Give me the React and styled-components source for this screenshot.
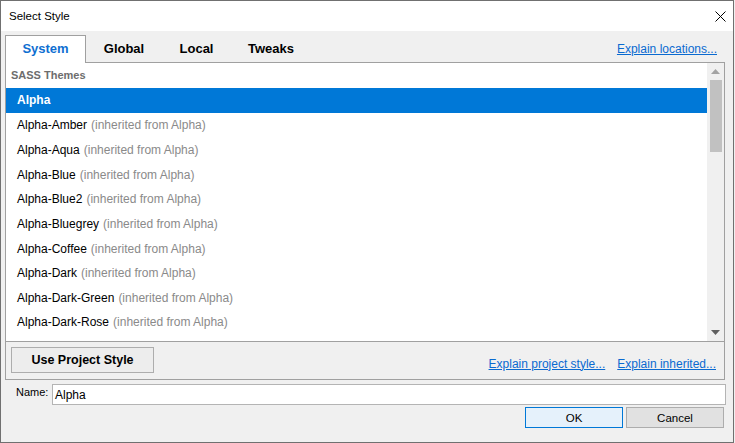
import styled, { createGlobalStyle } from 'styled-components';

const GlobalStyle = createGlobalStyle`
  html, body {
    margin: 0;
    padding: 0;
    background: #f0f0f0;
  }
  * {
    box-sizing: border-box;
  }
`;

const Window = styled.div`
  width: 734px;
  height: 443px;
  border: 1px solid #707070;
  background: #f0f0f0;
  display: flex;
  flex-direction: column;
  font-family: "Liberation Sans", Arial, sans-serif;
  color: #000;
  overflow: hidden;
`;

const TitleBar = styled.div`
  height: 30px;
  flex: none;
  background: #fff;
  display: flex;
  align-items: center;
  padding-left: 8px;
  font-size: 11.5px;
`;

const CloseButton = styled.div`
  margin-left: auto;
  width: 46px;
  height: 30px;
  display: flex;
  align-items: center;
  justify-content: center;
  margin-right: -10px;
`;

const Content = styled.div`
  flex: 1;
  display: flex;
  flex-direction: column;
  padding: 4px 8px 0 4px;
`;

const TabRow = styled.div`
  display: flex;
  align-items: flex-end;
  height: 28px;
  margin-bottom: -1px;
`;

const Tab = styled.div`
  position: relative;
  z-index: 1;
  width: ${p => p.$w}px;
  height: ${p => (p.$active ? 28 : 27)}px;
  align-self: flex-start;
  display: flex;
  align-items: center;
  justify-content: center;
  font-size: 13px;
  font-weight: bold;
  color: ${p => (p.$active ? '#0f6fd1' : '#000')};
  background: ${p => (p.$active ? '#fff' : 'transparent')};
  border: 1px solid ${p => (p.$active ? '#a0a0a0' : 'transparent')};
  border-bottom: none;
  padding-bottom: 2px;
`;

const Link = styled.span`
  color: #0a6ad0;
  text-decoration: underline;
  font-size: 12px;
  white-space: nowrap;
`;

const TabLink = styled(Link)`
  margin-left: auto;
  margin-right: 8px;
  align-self: center;
  padding-bottom: 1px;
`;

const Panel = styled.div`
  height: 318px;
  border: 1px solid #a0a0a0;
  display: flex;
  flex-direction: column;
`;

const ListArea = styled.div`
  height: 279px;
  flex: none;
  display: flex;
  background: #fff;
  border-bottom: 1px solid #a0a0a0;
`;

const List = styled.div`
  flex: 1;
  overflow: hidden;
`;

const GroupHeader = styled.div`
  height: 25px;
  line-height: 25px;
  padding-left: 5px;
  font-size: 11px;
  font-weight: bold;
  color: #6d6d6d;
`;

const Row = styled.div`
  height: 24.625px;
  display: flex;
  align-items: center;
  padding-left: 11px;
  padding-top: ${p => (p.$selected ? 0 : 1)}px;
  font-size: 12px;
  white-space: nowrap;
  background: ${p => (p.$selected ? '#0078d7' : 'transparent')};
  color: ${p => (p.$selected ? '#fff' : '#000')};
  font-weight: ${p => (p.$selected ? 'bold' : 'normal')};
`;

const Inherited = styled.span`
  color: #8a8a8a;
  margin-left: 4px;
`;

const Scrollbar = styled.div`
  width: 17px;
  flex: none;
  background: #f0f0f0;
  display: flex;
  flex-direction: column;
  align-items: center;
`;

const ArrowBox = styled.div`
  height: 17px;
  width: 17px;
  display: flex;
  align-items: center;
  justify-content: center;
`;

const Thumb = styled.div`
  width: 12px;
  height: 72px;
  background: #c1c1c1;
  margin-left: 1px;
`;

const Spacer = styled.div`
  flex: 1;
`;

const ActionRow = styled.div`
  flex: 1;
  display: flex;
  align-items: flex-start;
  padding: 5px 8px 0 5px;
  gap: 12px;
`;

const ProjectButton = styled.div`
  width: 143px;
  height: 26px;
  border: 1px solid #adadad;
  background: #ededed;
  display: flex;
  align-items: center;
  justify-content: center;
  font-size: 12.5px;
  font-weight: bold;
  margin-right: auto;
`;

const RowLink = styled(Link)`
  align-self: center;
  margin-top: 1px;
`;

const NameRow = styled.div`
  display: flex;
  align-items: flex-start;
  margin-top: 4px;
  margin-right: -1px;
`;

const NameLabel = styled.div`
  width: 36px;
  margin-left: 11px;
  padding-top: 2px;
  font-size: 11px;
`;

const NameInput = styled.div`
  flex: 1;
  height: 21px;
  border: 1px solid #b4b4b4;
  background: #fff;
  font-size: 12px;
  display: flex;
  align-items: center;
  padding-left: 2px;
  padding-top: 1px;
`;

const ButtonRow = styled.div`
  display: flex;
  justify-content: flex-end;
  gap: 3px;
  margin-top: 2px;
  margin-right: 1px;
`;

const DialogButton = styled.div`
  width: 98px;
  height: 21px;
  display: flex;
  align-items: center;
  justify-content: center;
  font-size: 11.5px;
  border: 1px solid ${p => (p.$default ? '#0078d7' : '#adadad')};
  background: ${p => (p.$default ? '#e5f1fb' : '#e1e1e1')};
`;

const themes = [
  'Alpha-Amber',
  'Alpha-Aqua',
  'Alpha-Blue',
  'Alpha-Blue2',
  'Alpha-Bluegrey',
  'Alpha-Coffee',
  'Alpha-Dark',
  'Alpha-Dark-Green',
  'Alpha-Dark-Rose',
];

const tabs = [
  { label: 'System', w: 81 },
  { label: 'Global', w: 76 },
  { label: 'Local', w: 69 },
  { label: 'Tweaks', w: 80 },
];

const App = () => {
  return (
    <>
      <GlobalStyle />
      <Window>
        <TitleBar>
          Select Style
          <CloseButton>
            <svg width="11" height="11" viewBox="0 0 11 11">
              <path d="M0.5 0.5 L10.5 10.5 M10.5 0.5 L0.5 10.5" stroke="#000" strokeWidth="1" />
            </svg>
          </CloseButton>
        </TitleBar>
        <Content>
          <TabRow>
            {tabs.map((t, i) => (
              <Tab key={t.label} $w={t.w} $active={i === 0}>
                {t.label}
              </Tab>
            ))}
            <TabLink>Explain locations...</TabLink>
          </TabRow>
          <Panel>
            <ListArea>
              <List>
                <GroupHeader>SASS Themes</GroupHeader>
                <Row $selected>Alpha</Row>
                {themes.map(name => (
                  <Row key={name}>
                    {name}
                    <Inherited>(inherited from Alpha)</Inherited>
                  </Row>
                ))}
              </List>
              <Scrollbar>
                <ArrowBox>
                  <svg width="9" height="5" viewBox="0 0 9 5">
                    <path d="M4.5 0 L9 5 L0 5 Z" fill="#a3a3a3" />
                  </svg>
                </ArrowBox>
                <Thumb />
                <Spacer />
                <ArrowBox>
                  <svg width="9" height="5" viewBox="0 0 9 5">
                    <path d="M0 0 L9 0 L4.5 5 Z" fill="#606060" />
                  </svg>
                </ArrowBox>
              </Scrollbar>
            </ListArea>
            <ActionRow>
              <ProjectButton>Use Project Style</ProjectButton>
              <RowLink>Explain project style...</RowLink>
              <RowLink>Explain inherited...</RowLink>
            </ActionRow>
          </Panel>
          <NameRow>
            <NameLabel>Name:</NameLabel>
            <NameInput>Alpha</NameInput>
          </NameRow>
          <ButtonRow>
            <DialogButton $default>OK</DialogButton>
            <DialogButton>Cancel</DialogButton>
          </ButtonRow>
        </Content>
      </Window>
    </>
  );
};

export default App;
